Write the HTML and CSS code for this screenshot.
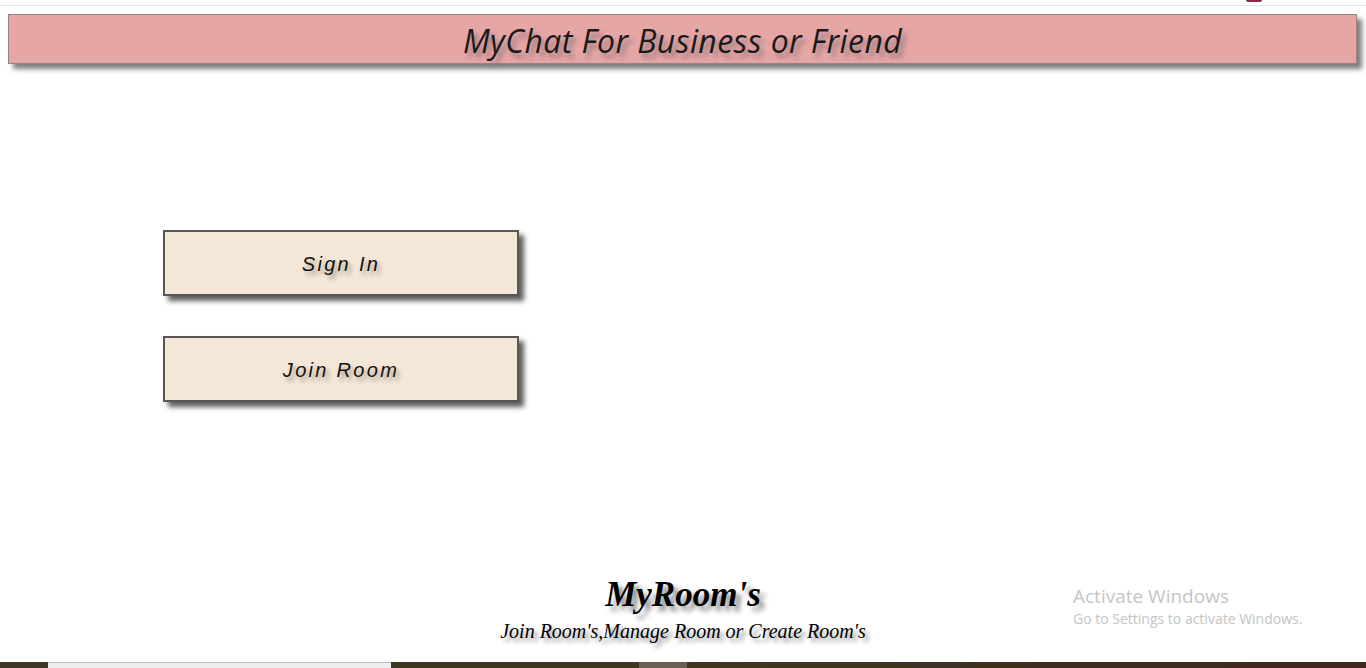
FILE: index.html
```html
<!DOCTYPE html>
<html>
<head>
<meta charset="utf-8">
<title>MyChat</title>
<link rel="stylesheet" href="styles.css">
</head>
<body>
<div class="page">
  <div class="topline"></div>
  <header class="header"><h1 class="title">MyChat For Business or Friend</h1></header>
  <main class="actions">
    <button class="btn">Sign In</button>
    <button class="btn">Join Room</button>
  </main>
  <footer class="footer">
    <div class="brand">MyRoom's</div>
    <div class="tagline">Join Room's,Manage Room or Create Room's</div>
  </footer>
  <div class="taskbar">
    <div class="tb-dark tb-start"></div>
    <div class="tb-light"></div>
    <div class="tb-dark tb-mid"></div>
    <div class="tb-grey"></div>
    <div class="tb-dark tb-end"></div>
  </div>
  <div class="watermark">
    <div class="wm-title">Activate Windows</div>
    <div class="wm-sub">Go to Settings to activate Windows.</div>
  </div>
  <div class="redmark"></div>
</div>
</body>
</html>
```
FILE: styles.css
```css
html, body {
  margin: 0;
  padding: 0;
  background: #ffffff;
  overflow: hidden;
}
.page {
  position: relative;
  width: 1366px;
  height: 668px;
  display: flex;
  flex-direction: column;
}
.topline {
  margin-top: 5px;
  height: 1px;
  background: #e4e4e4;
}
.header {
  margin: 8px 9px 0 8px;
  height: 48px;
  background: #e6a6a6;
  border: 1px solid #9a8080;
  box-shadow: 5px 5px 5px #7d7d7d;
  display: flex;
  align-items: center;
  justify-content: center;
}
.title {
  margin: 0;
  padding-top: 3px;
  font-family: "Open Sans", "DejaVu Sans", sans-serif;
  font-style: italic;
  font-weight: 400;
  font-size: 32px;
  letter-spacing: 0.4px;
  color: #1a1a1a;
  text-shadow: 4px 5px 5px #9a7878;
}
.actions {
  margin-top: 166px;
  margin-left: 163px;
  display: flex;
  flex-direction: column;
  gap: 40px;
  align-items: flex-start;
}
.btn {
  width: 356px;
  height: 66px;
  background: #f5e7d8;
  border: 2px solid #5a5550;
  box-shadow: 5px 5px 5px #5e5e5e;
  font-family: "Liberation Sans", Arial, sans-serif;
  font-style: italic;
  font-size: 20px;
  letter-spacing: 2.3px;
  color: #111;
  text-shadow: 3px 4px 4px #a09682;
  padding: 2px 0 0 0;
  cursor: pointer;
}
.footer {
  margin-top: 173px;
  display: flex;
  flex-direction: column;
  align-items: center;
  font-family: "Liberation Serif", "Times New Roman", serif;
  font-style: italic;
  color: #000;
}
.brand {
  font-weight: 700;
  font-size: 35px;
  line-height: 40px;
  text-shadow: 5px 5px 5px #8a8a8a;
}
.tagline {
  font-size: 20px;
  line-height: 28px;
  margin-top: 2px;
  text-shadow: 4px 4px 4px #8a8a8a;
}
.taskbar {
  margin-top: auto;
  height: 6px;
  display: flex;
}
.tb-dark { background: #3c3626; }
.tb-start { width: 48px; }
.tb-light { width: 343px; background: #eeeeee; border-top: 1px solid #bdbdbd; }
.tb-mid { width: 248px; background: #3d3724; }
.tb-grey { width: 48px; background: #6a6250; }
.tb-end { flex: 1; background: linear-gradient(90deg, #3e3522, #3f2a1e); }
.watermark {
  position: absolute;
  left: 1073px;
  top: 584px;
  font-family: "Open Sans", "DejaVu Sans", sans-serif;
  color: #c4c4c4;
}
.wm-title {
  font-size: 19px;
  line-height: 25px;
}
.wm-sub {
  font-size: 14px;
  line-height: 20px;
}
.redmark {
  position: absolute;
  left: 1246px;
  top: 0;
  width: 16px;
  height: 2px;
  background: #8a2c4a;
  border-radius: 0 0 4px 4px;
}
```
